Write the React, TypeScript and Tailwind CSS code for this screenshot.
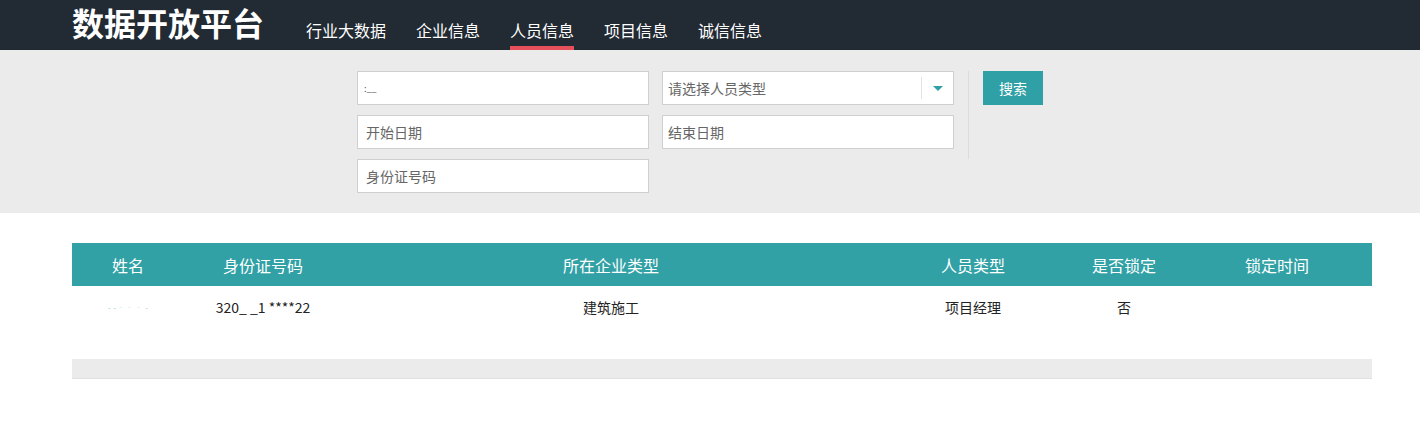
import React from 'react';

const navItems = ['行业大数据', '企业信息', '人员信息', '项目信息', '诚信信息'];

const columns = [
  { title: '姓名', w: 'w-[112px]' },
  { title: '身份证号码', w: 'w-[158px]' },
  { title: '所在企业类型', w: 'w-[538px]' },
  { title: '人员类型', w: 'w-[186px]' },
  { title: '是否锁定', w: 'w-[116px]' },
  { title: '锁定时间', w: 'flex-1' },
];

export default function App() {
  return (
    <div className="w-[1420px] h-[422px] bg-white font-['Noto_Sans_CJK_SC','Noto_Sans',sans-serif]">
      {/* header */}
      <header className="h-[50px] bg-[#222a33] flex items-stretch pl-[72px]">
        <h1 className="text-[32px] leading-[50px] font-bold text-white -mt-[3px]">数据开放平台</h1>
        <nav className="flex gap-[30px] ml-[42px]">
          {navItems.map((item) => (
            <a
              key={item}
              className={`text-[16px] text-white leading-[50px] pt-[5px] ${item === '人员信息' ? 'border-b-4 border-[#e5505a]' : ''}`}
            >
              {item}
            </a>
          ))}
        </nav>
      </header>

      {/* filter */}
      <section className="h-[163px] bg-[#ebebeb] pt-[21px] pl-[357px] flex">
        <div className="grid grid-cols-[292px_292px] gap-x-[13px] gap-y-[10px] content-start">
          <div className="h-[34px] bg-white border border-[#cfcfcf] px-[6px] flex items-center text-[#555]">
            <span className="text-[9px] leading-none">:__</span>
          </div>
          <div className="h-[34px] bg-white border border-[#cfcfcf] pl-[5px] flex items-center text-[14px] text-[#666]">
            <span className="flex-1">请选择人员类型</span>
            <span className="h-[22px] w-px bg-[#e2e2e2]" />
            <span className="w-[31px] flex justify-center">
              <span className="w-0 h-0 border-l-[5px] border-r-[5px] border-t-[5px] border-l-transparent border-r-transparent border-t-[#2fa0a5]" />
            </span>
          </div>
          <input className="h-[34px] bg-white border border-[#cfcfcf] px-2 text-[14px] placeholder-[#666] outline-none" placeholder="开始日期" />
          <input className="h-[34px] bg-white border border-[#cfcfcf] px-[5px] text-[14px] placeholder-[#666] outline-none" placeholder="结束日期" />
          <input className="h-[34px] bg-white border border-[#cfcfcf] px-2 text-[14px] placeholder-[#666] outline-none" placeholder="身份证号码" />
        </div>
        <div className="ml-[14px] w-px h-[88px] bg-[#dcdcdc]" />
        <div className="ml-[14px]">
          <button className="w-[60px] h-[34px] bg-[#2fa0a5] text-white text-[14px]">搜索</button>
        </div>
      </section>

      {/* table */}
      <div className="ml-[72px] w-[1300px] mt-[30px]">
        <div className="h-[43px] bg-[#31a1a6] flex items-center text-white text-[16px]">
          {columns.map((c) => (
            <div key={c.title} className={`${c.w} text-center`}>{c.title}</div>
          ))}
        </div>
        <div className="h-[43px] flex items-center text-[14px] text-[#222]">
          <div className="w-[112px] text-center text-[9px] text-[#7bc3c6] opacity-60">- -‐‐‐ -</div>
          <div className="w-[158px] text-center">320_ _1 ****22</div>
          <div className="w-[538px] text-center">建筑施工</div>
          <div className="w-[186px] text-center">项目经理</div>
          <div className="w-[116px] text-center">否</div>
          <div className="flex-1" />
        </div>
        <div className="mt-[30px] h-[20px] bg-[#ebebeb] border-b border-[#e0e0e0]" />
      </div>
    </div>
  );
}
